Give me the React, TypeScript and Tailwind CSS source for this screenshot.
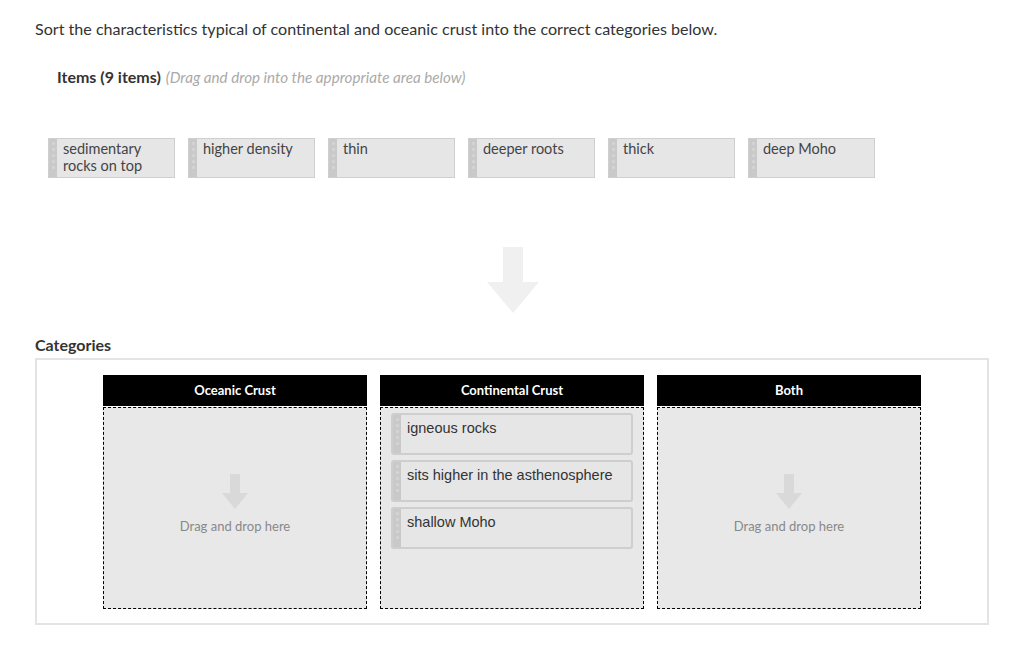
import React from "react";

const lato = { fontFamily: "Lato, 'Open Sans', sans-serif" };

function Handle() {
  return (
    <div className="w-[8px] shrink-0 bg-[#c9c9c9] flex flex-col items-center justify-start gap-[3px] pt-[3px]">
      {[0, 1, 2, 3, 4].map((i) => (
        <div key={i} className="w-[3px] h-[3px] rounded-full bg-[#d6d6d6]" />
      ))}
    </div>
  );
}

function ItemCard({ text }: { text: string }) {
  return (
    <div className="w-[127px] h-[40px] flex bg-[#e6e6e6] border border-[#cfcfcf]">
      <Handle />
      <div
        className="pl-[6px] pr-1 pt-[1px] text-[14.5px] leading-[17px] text-[#444]"
        style={lato}
      >
        {text}
      </div>
    </div>
  );
}

function PlacedItem({ text }: { text: string }) {
  return (
    <div className="h-[42px] flex bg-[#e6e6e6] border-2 border-[#cecece] rounded-[3px] overflow-hidden">
      <Handle />
      <div
        className="pl-[6px] pt-[5px] text-[14.5px] leading-[17px] text-[#333]"
        style={{ fontFamily: "'Liberation Sans', Arial, sans-serif" }}
      >
        {text}
      </div>
    </div>
  );
}

function SmallArrow() {
  return (
    <svg width="26" height="36" viewBox="0 0 26 36">
      <rect x="8" y="0" width="10" height="20" fill="#d9d9d9" />
      <polygon points="0,19 26,19 13,35" fill="#d9d9d9" />
    </svg>
  );
}

function Column({ title, children }: { title: string; children?: React.ReactNode }) {
  return (
    <div className="w-[264px] flex flex-col">
      <div
        className="h-[31px] bg-black text-white text-[13px] font-bold flex items-center justify-center"
        style={lato}
      >
        {title}
      </div>
      <div className="mt-[1px] h-[202px] border border-dashed border-black bg-[#e8e8e8]">
        {children}
      </div>
    </div>
  );
}

function EmptyDrop() {
  return (
    <div className="h-full flex flex-col items-center pt-[66px]">
      <SmallArrow />
      <div className="mt-[7px] text-[13px] text-[#888]" style={lato}>
        Drag and drop here
      </div>
    </div>
  );
}

export default function App() {
  const items = [
    "sedimentary rocks on top",
    "higher density",
    "thin",
    "deeper roots",
    "thick",
    "deep Moho",
  ];
  return (
    <div className="w-[1024px] h-[666px] bg-white text-[#333]" style={lato}>
      <div className="pl-[35px] pt-[19px] text-[16.1px] leading-[20px] text-[#333]">
        Sort the characteristics typical of continental and oceanic crust into the correct categories below.
      </div>
      <div className="pl-[57px] pt-[26px] flex items-baseline gap-[5px]">
        <span className="text-[16px] font-bold text-[#333]">Items (9 items)</span>
        <span className="text-[15.2px] italic text-[#aaa]">(Drag and drop into the appropriate area below)</span>
      </div>
      <div className="pl-[48px] pt-[49px] flex gap-[13px]">
        {items.map((t) => (
          <ItemCard key={t} text={t} />
        ))}
      </div>
      <div className="flex justify-center pt-[69px] pl-[2px]">
        <svg width="52" height="66" viewBox="0 0 52 66">
          <rect x="16" y="0" width="20" height="36" fill="#f0f0f0" />
          <polygon points="0,35 52,35 26,66" fill="#f0f0f0" />
        </svg>
      </div>
      <div className="pl-[35px] pt-[22px] text-[16px] font-bold text-[#333] leading-[20px]">
        Categories
      </div>
      <div className="ml-[35px] mt-[3px] w-[954px] h-[267px] border-2 border-[#e4e4e4] flex justify-center gap-[13px] pt-[15px]">
        <Column title="Oceanic Crust">
          <EmptyDrop />
        </Column>
        <Column title="Continental Crust">
          <div className="flex flex-col gap-[5px] pl-[10px] pr-[10px] pt-[5px]">
            <PlacedItem text="igneous rocks" />
            <PlacedItem text="sits higher in the asthenosphere" />
            <PlacedItem text="shallow Moho" />
          </div>
        </Column>
        <Column title="Both">
          <EmptyDrop />
        </Column>
      </div>
    </div>
  );
}
